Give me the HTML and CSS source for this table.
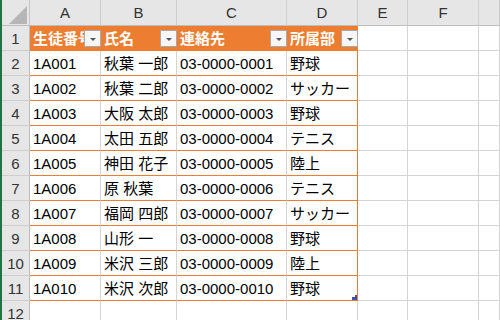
FILE: index.html
```html
<!DOCTYPE html>
<html lang="ja">
<head>
<meta charset="utf-8">
<link rel="stylesheet" href="styles.css">
</head>
<body>
<div class="sheet">
  <div class="corner"><svg width="18" height="18" viewBox="0 0 18 18"><polygon points="18,0 18,18 0,18" fill="#b6b6b6"/></svg></div>
  <div class="colhead">A</div><div class="colhead">B</div><div class="colhead">C</div><div class="colhead">D</div><div class="colhead">E</div><div class="colhead">F</div><div class="colhead"></div>

  <div class="rowhead">1</div>
  <div class="cell th">生徒番号<span class="filter"></span></div>
  <div class="cell th">氏名<span class="filter"></span></div>
  <div class="cell th">連絡先<span class="filter"></span></div>
  <div class="cell th last">所属部<span class="filter"></span></div>
  <div class="cell"></div><div class="cell"></div><div class="cell"></div>

  <div class="rowhead">2</div>
  <div class="cell td">1A001</div><div class="cell td">秋葉 一郎</div><div class="cell td">03-0000-0001</div><div class="cell td last">野球</div>
  <div class="cell"></div><div class="cell"></div><div class="cell"></div>

  <div class="rowhead">3</div>
  <div class="cell td">1A002</div><div class="cell td">秋葉 二郎</div><div class="cell td">03-0000-0002</div><div class="cell td last">サッカー</div>
  <div class="cell"></div><div class="cell"></div><div class="cell"></div>

  <div class="rowhead">4</div>
  <div class="cell td">1A003</div><div class="cell td">大阪 太郎</div><div class="cell td">03-0000-0003</div><div class="cell td last">野球</div>
  <div class="cell"></div><div class="cell"></div><div class="cell"></div>

  <div class="rowhead">5</div>
  <div class="cell td">1A004</div><div class="cell td">太田 五郎</div><div class="cell td">03-0000-0004</div><div class="cell td last">テニス</div>
  <div class="cell"></div><div class="cell"></div><div class="cell"></div>

  <div class="rowhead">6</div>
  <div class="cell td">1A005</div><div class="cell td">神田 花子</div><div class="cell td">03-0000-0005</div><div class="cell td last">陸上</div>
  <div class="cell"></div><div class="cell"></div><div class="cell"></div>

  <div class="rowhead">7</div>
  <div class="cell td">1A006</div><div class="cell td">原 秋葉</div><div class="cell td">03-0000-0006</div><div class="cell td last">テニス</div>
  <div class="cell"></div><div class="cell"></div><div class="cell"></div>

  <div class="rowhead">8</div>
  <div class="cell td">1A007</div><div class="cell td">福岡 四郎</div><div class="cell td">03-0000-0007</div><div class="cell td last">サッカー</div>
  <div class="cell"></div><div class="cell"></div><div class="cell"></div>

  <div class="rowhead">9</div>
  <div class="cell td">1A008</div><div class="cell td">山形 一</div><div class="cell td">03-0000-0008</div><div class="cell td last">野球</div>
  <div class="cell"></div><div class="cell"></div><div class="cell"></div>

  <div class="rowhead">10</div>
  <div class="cell td">1A009</div><div class="cell td">米沢 三郎</div><div class="cell td">03-0000-0009</div><div class="cell td last">陸上</div>
  <div class="cell"></div><div class="cell"></div><div class="cell"></div>

  <div class="rowhead">11</div>
  <div class="cell td">1A010</div><div class="cell td">米沢 次郎</div><div class="cell td">03-0000-0010</div><div class="cell td last">野球<svg class="resize" width="5" height="5" viewBox="0 0 5 5"><polygon points="3,0 5,0 5,5 0,5 0,2 3,2" fill="#3f51a8"/></svg></div>
  <div class="cell"></div><div class="cell"></div><div class="cell"></div>

  <div class="rowhead">12</div>
  <div class="cell"></div><div class="cell"></div><div class="cell"></div><div class="cell"></div>
  <div class="cell"></div><div class="cell"></div><div class="cell"></div>
</div>
</body>
</html>
```

FILE: styles.css
```css
html, body {
  margin: 0;
  padding: 0;
  background: #ffffff;
  overflow: hidden;
}

.sheet {
  width: 500px;
  height: 320px;
  box-sizing: border-box;
  border-left: 2px solid #217346;
  display: grid;
  grid-template-columns: 28px 71px 76px 110px 71px 50px 71px 1fr;
  grid-template-rows: 26px repeat(12, 25px);
  overflow: hidden;
  font-family: "Liberation Sans", "Noto Sans CJK JP", sans-serif;
  font-size: 15px;
  color: #000;
}

.sheet > div {
  box-sizing: border-box;
  border-right: 1px solid #d4d4d4;
  border-bottom: 1px solid #d4d4d4;
  white-space: nowrap;
  position: relative;
}

.corner {
  background: #e6e6e6;
  display: flex;
  justify-content: flex-end;
  align-items: flex-end;
  padding: 0 2px 1px 0;
  border-right-color: #c6c6c6 !important;
  border-bottom-color: #bdbdbd !important;
}

.colhead {
  background: #e6e6e6;
  color: #333;
  text-align: center;
  line-height: 22px;
  padding-top: 2px;
  border-right-color: #cdcdcd !important;
  border-bottom-color: #bdbdbd !important;
}

.rowhead {
  background: #e6e6e6;
  color: #333;
  text-align: center;
  line-height: 22px;
  padding-top: 2px;
  border-right-color: #bdbdbd !important;
  border-bottom-color: #cdcdcd !important;
}

.cell {
  padding: 2px 0 0 3px;
  line-height: 22px;
}

.th {
  background: #ed7d31;
  color: #ffffff;
  font-weight: bold;
  border-right-color: #ed7d31 !important;
  border-bottom-color: #ed7d31 !important;
}

.td {
  border-bottom-color: #ed7d31 !important;
}

.last {
  border-right-color: #ed7d31 !important;
}

.filter {
  position: absolute;
  top: 4px;
  right: -1px;
  width: 17px;
  height: 17px;
  box-sizing: border-box;
  border: 1px solid #a9a9a9;
  background: #f6f6f6;
  display: flex;
  align-items: center;
  justify-content: center;
}

.filter::after {
  content: "";
  width: 0;
  height: 0;
  border-left: 3px solid transparent;
  border-right: 3px solid transparent;
  border-top: 3px solid #555;
  margin-top: 2px;
}

.resize {
  position: absolute;
  right: 0;
  bottom: 0;
}
```
